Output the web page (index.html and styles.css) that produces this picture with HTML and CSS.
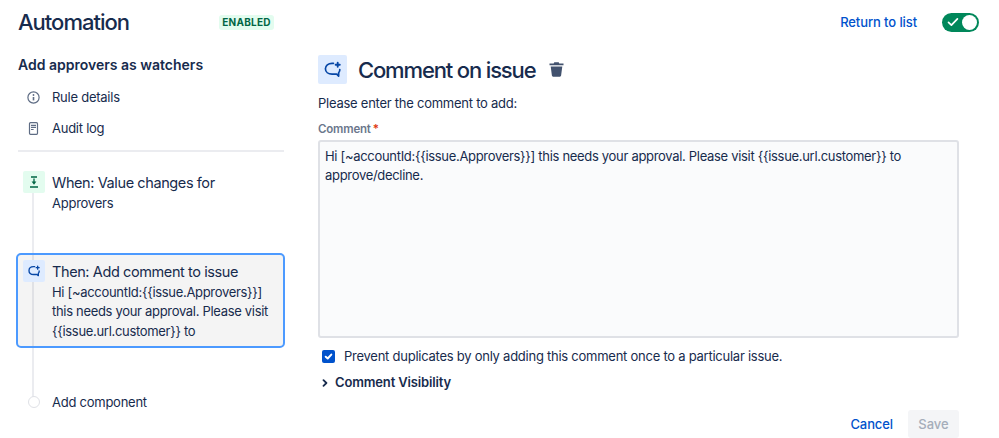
FILE: index.html
```
<!DOCTYPE html>
<html lang="en">
<head>
    <meta charset="UTF-8">
    <meta name="viewport" content="width=device-width, initial-scale=1.0">
    <title>Automation</title>
    <link rel="stylesheet" href="styles.css">
</head>
<body>
    <header class="header">
        <h1 class="page-title">Automation</h1>
        <span class="lozenge">ENABLED</span>
        <a class="link return-link" href="#">Return to list</a>
        <button class="toggle" aria-label="Rule enabled">
            <svg width="12" height="10" viewBox="0 0 12 10" fill="none" stroke="#fff" stroke-width="1.7" stroke-linecap="round" stroke-linejoin="round"><path d="M1.5 5.4 4.4 8.2 10.4 1.8"/></svg>
            <span class="knob"></span>
        </button>
    </header>

    <div class="layout">
        <aside class="sidebar">
            <h2 class="rule-name">Add approvers as watchers</h2>
            <nav class="rule-nav">
                <a class="nav-item" href="#">
                    <svg width="13" height="13" viewBox="0 0 13 13" fill="none" stroke="#5e6c84"><circle cx="6.5" cy="6.5" r="5.6" stroke-width="1.2"/><path d="M6.5 6v3.4" stroke-width="1.6"/><circle cx="6.5" cy="4" r=".9" fill="#5e6c84" stroke="none"/></svg>
                    <span>Rule details</span>
                </a>
                <a class="nav-item" href="#">
                    <svg width="13" height="13" viewBox="0 0 13 13" fill="none" stroke="#5e6c84" stroke-width="1.2"><rect x="2.5" y=".7" width="8" height="11.6" rx="1"/><path d="M4 3.3h5M4 5.4h5M4 7.5h2.6"/></svg>
                    <span>Audit log</span>
                </a>
            </nav>

            <div class="chain">
                <div class="step">
                    <span class="step-icon trigger">
                        <svg width="10" height="12" viewBox="0 0 10 12" fill="none" stroke="#006644" stroke-width="1.3"><path d="M2 1h6M1 11h8M5 2.500v4.500"/><path d="M2.600 5.600h4.800L5 8.800z" fill="#006644" stroke="none"/></svg>
                    </span>
                    <div class="step-body">
                        <div class="step-title">When: Value changes for</div>
                        <div class="step-text">Approvers</div>
                    </div>
                </div>
                <div class="step selected">
                    <span class="step-icon action">
                        <svg width="12" height="12" viewBox="0 0 18 18" fill="none" stroke="#0747a6" stroke-width="2" stroke-linecap="round" stroke-linejoin="round"><path d="M10 2.500H8.500C4.500 2.500 1.500 5 1.500 8.500S4.500 14.200 8.500 14.200H13.500L15.500 16V12.500C16.500 11.500 16.900 10.300 16.700 9"/><path d="M14.500 1.800v4.400M12.300 4h4.400"/></svg>
                    </span>
                    <div class="step-body">
                        <div class="step-title">Then: Add comment to issue</div>
                        <div class="step-text">Hi [~accountId:{{issue.Approvers}}] this needs your approval. Please visit {{issue.url.customer}} to</div>
                    </div>
                </div>
                <div class="step add">
                    <span class="dot"></span>
                    <div>Add component</div>
                </div>
            </div>
        </aside>

        <main class="editor">
            <div class="editor-head">
                <span class="head-icon">
                    <svg width="17" height="17" viewBox="0 0 18 18" fill="none" stroke="#0747a6" stroke-width="1.8" stroke-linecap="round" stroke-linejoin="round"><path d="M10 2.500H8.500C4.500 2.500 1.500 5 1.500 8.300S4.500 14 8.500 14H13.500L15.500 16V12.500C16.500 11.500 16.900 10.300 16.700 9"/><path d="M14.500 1.800v4.400M12.300 4h4.400" stroke-width="2"/></svg>
                </span>
                <h2 class="editor-title">Comment on issue</h2>
                <svg class="trash" width="15" height="15" viewBox="0 0 15 15" fill="#42526e"><path d="M.5 1.500h4.200L5.300.3h4.400l.6 1.200h4.200v1.800H.5zM1.700 4.400h11.600l-1.200 9.200q-.1 1.100-1.200 1.100H4.100q-1.100 0-1.200-1.100z"/></svg>
            </div>
            <p class="intro">Please enter the comment to add:</p>
            <label class="field-label" for="comment">Comment<span class="required">*</span></label>
            <textarea class="comment" id="comment" spellcheck="false">Hi [~accountId:{{issue.Approvers}}] this needs your approval. Please visit {{issue.url.customer}} to approve/decline.</textarea>
            <div class="check-row">
                <span class="checkbox">
                    <svg width="13" height="13" viewBox="0 0 13 13" fill="none" stroke="#fff" stroke-width="2" stroke-linecap="round" stroke-linejoin="round"><path d="M3.700 6.700 5.700 8.500 9.300 4.600"/></svg>
                </span>
                <span>Prevent duplicates by only adding this comment once to a particular issue.</span>
            </div>
            <div class="expander">
                <svg width="6" height="8" viewBox="0 0 6 8" fill="none" stroke="#172b4d" stroke-width="1.8" stroke-linecap="round" stroke-linejoin="round"><path d="M1.500 1.200 4.400 4 1.500 6.800"/></svg>
                <span>Comment Visibility</span>
            </div>
            <div class="actions">
                <a class="link" href="#">Cancel</a>
                <button class="save" disabled>Save</button>
            </div>
        </main>
    </div>
</body>
</html>
```
FILE: styles.css
```
* {
    box-sizing: border-box;
}

body {
    margin: 0;
    height: 438px;
    overflow: hidden;
    background: #fff;
    color: #172b4d;
    font-family: Inter, "Liberation Sans", sans-serif;
    font-size: 13px;
    line-height: 19px;
    letter-spacing: -0.25px;
}

h1, h2, p {
    margin: 0;
}

a {
    color: inherit;
    text-decoration: none;
}

svg {
    display: block;
    flex: none;
}

button {
    border: none;
    font: inherit;
}

.header {
    display: flex;
    align-items: center;
    height: 44px;
    padding: 0 20px 0 18px;
}

.page-title {
    width: 201px;
    font-size: 22px;
    font-weight: 500;
    letter-spacing: -1px;
}

.lozenge {
    width: 55px;
    height: 15px;
    border-radius: 3px;
    background: #e3fcef;
    color: #006644;
    font-size: 10px;
    font-weight: 700;
    line-height: 15px;
    letter-spacing: 0.25px;
    text-align: center;
}

.link {
    color: #0052cc;
    font-weight: 500;
    letter-spacing: -0.1px;
}

.return-link {
    margin-left: auto;
}

.toggle {
    display: flex;
    align-items: center;
    justify-content: space-between;
    width: 37px;
    height: 19px;
    margin-left: 25px;
    padding: 0 2px 0 5px;
    border-radius: 10px;
    background: #00875a;
}

.knob {
    width: 15px;
    height: 15px;
    border-radius: 50%;
    background: #fff;
}

.layout {
    display: flex;
}

/* sidebar */
.sidebar {
    width: 284px;
    padding: 11px 0 0 18px;
}

.rule-name {
    font-size: 14px;
    font-weight: 600;
    letter-spacing: 0;
}

.rule-nav {
    padding: 8px 0 6px;
    border-bottom: 2px solid #ebecf0;
}

.nav-item {
    display: flex;
    align-items: center;
    gap: 12px;
    height: 31px;
    padding-left: 9px;
}

.chain {
    position: relative;
    margin: 12px -1px 0 -2px;
}

/* line that joins the steps */
.chain::before {
    content: "";
    position: absolute;
    top: 20px;
    bottom: 12px;
    left: 16px;
    width: 2px;
    background: #ebecf0;
}

.step {
    position: relative;
    display: flex;
    gap: 7px;
    height: 89px;
    padding: 7px;
    border-radius: 5px;
}

.step.selected {
    height: 95px;
    padding: 5px;
    border: 2px solid #4c9aff;
    background: rgba(9, 9, 9, 0.045);
}

.step-icon {
    display: flex;
    align-items: center;
    justify-content: center;
    flex: none;
    width: 22px;
    height: 22px;
    border-radius: 2px;
}

.trigger {
    background: #e3fcef;
}

.action {
    background: #deebff;
}

.step-title {
    padding-top: 2px;
    font-size: 14.5px;
    line-height: 20px;
    letter-spacing: -0.4px;
    white-space: nowrap;
}

.step-text {
    margin-top: 1px;
}

.selected .step-text {
    line-height: 19.300px;
    letter-spacing: -0.31px;
}

.step.add {
    align-items: center;
    gap: 12px;
    height: 20px;
    margin-top: 44px;
    padding: 0 12px;
}

.dot {
    width: 12px;
    height: 12px;
    border: 1px solid #dfe1e6;
    border-radius: 50%;
    background: #fff;
}

/* editor */
.editor {
    width: 641px;
    margin-left: 34px;
    padding-top: 11px;
}

.editor-head {
    display: flex;
    align-items: center;
    height: 29px;
}

.head-icon {
    display: flex;
    align-items: center;
    justify-content: center;
    width: 29px;
    height: 29px;
    border-radius: 2px;
    background: #deebff;
}

.editor-title {
    padding-top: 1px;
    margin-left: 11px;
    font-size: 22px;
    font-weight: 500;
    letter-spacing: -1.15px;
}

.trash {
    margin-left: 14px;
}

.intro {
    margin-top: 10px;
}

.field-label {
    display: block;
    margin-top: 7px;
    color: #6b778c;
    font-size: 11.5px;
    font-weight: 600;
    line-height: 18px;
    letter-spacing: -0.2px;
}

.required {
    padding-left: 2px;
    color: #de350b;
}

.comment {
    display: block;
    width: 641px;
    height: 198px;
    margin-top: 2px;
    padding: 5px;
    border: 2px solid #dfe1e6;
    border-radius: 3px;
    background: #fafbfc;
    color: inherit;
    font: inherit;
    line-height: 18.500px;
    letter-spacing: -0.31px;
    resize: none;
    outline: none;
}

.check-row {
    display: flex;
    align-items: center;
    gap: 9px;
    margin-top: 9px;
    padding-left: 4px;
}

.checkbox {
    border-radius: 2px;
    background: #0052cc;
}

.expander {
    display: flex;
    align-items: center;
    gap: 7px;
    margin-top: 7px;
    padding-left: 4px;
    font-weight: 600;
    letter-spacing: -0.15px;
}

.actions {
    display: flex;
    align-items: center;
    justify-content: flex-end;
    gap: 15px;
    margin-top: 18px;
}

.save {
    width: 51px;
    height: 28px;
    padding: 0;
    border-radius: 3px;
    background: #f4f5f7;
    color: #a5adba;
    font-weight: 500;
}
```
